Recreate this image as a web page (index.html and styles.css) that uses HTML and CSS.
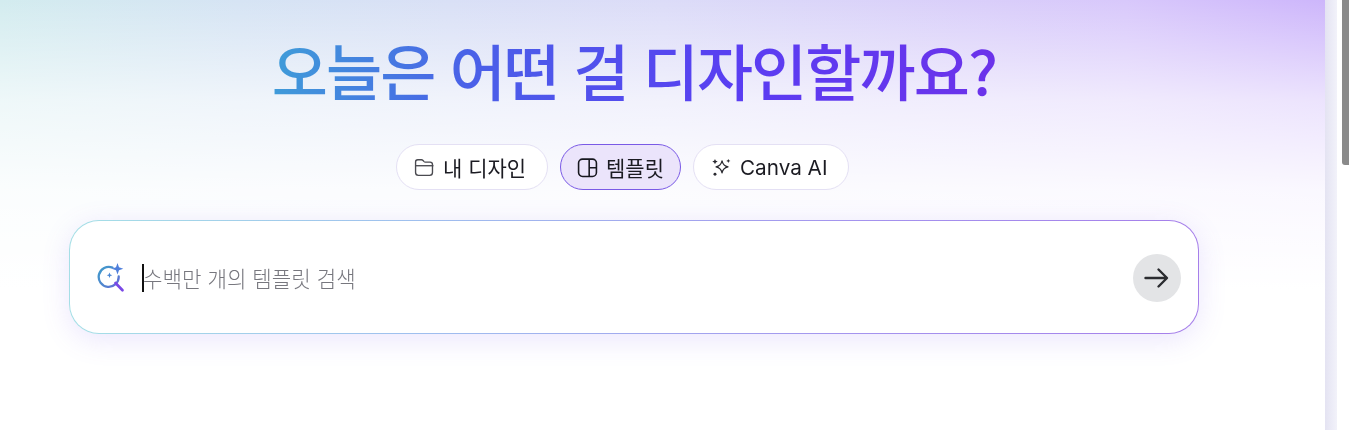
FILE: index.html
```html
<!DOCTYPE html>
<html lang="ko">
<head>
<meta charset="utf-8">
<title>Canva</title>
<link rel="stylesheet" href="styles.css">
</head>
<body>
<div class="page">
  <main class="hero">
    <div class="column">
      <h1 class="title"><span class="title-text">오늘은 어떤 걸 디자인할까요?</span></h1>
      <div class="pills">
        <button class="pill pill-a">
          <svg class="pill-icon" viewBox="0 0 20 20" fill="none" stroke="#4a4a50" stroke-width="1.300" stroke-linejoin="round"><path d="M1.500 4.700c0-1.200.9-2.100 2.100-2.100h3.500c.6 0 1.100.3 1.500.7l1 1.100c.3.3.7.500 1.100.500h4.600c1.300 0 2.300 1 2.300 2.300v7.600c0 1.500-1.200 2.700-2.700 2.700H4.200c-1.500 0-2.700-1.200-2.700-2.700z"/><path d="M1.500 8.300h17"/></svg>
          <span class="label">내 디자인</span>
        </button>
        <button class="pill pill-b is-active">
          <svg class="pill-icon" viewBox="0 0 20 20" fill="none" stroke="#17171f" stroke-width="1.500"><rect x="1.500" y="2" width="17" height="16.500" rx="3.800"/><path d="M11.600 2v16.500M11.600 10.200h6.900"/></svg>
          <span class="label">템플릿</span>
        </button>
        <button class="pill pill-c">
          <svg class="pill-icon" viewBox="0 0 20 20" fill="none" stroke="#2a2a30" stroke-width="1.200" stroke-linejoin="round"><path d="M10.500 3.800c.7 3.400 2.200 5 5.700 5.700-3.500.7-5 2.300-5.700 5.700-.7-3.400-2.200-5-5.700-5.700 3.500-.7 5-2.300 5.700-5.700z"/><g fill="#2a2a30" stroke="none"><path d="M3.800 1.800l.8 1.800 1.800.8-1.800.8-.8 1.800-.8-1.800-1.800-.8 1.800-.8z"/><path d="M16.500 1.800l.6 1.400 1.400.6-1.400.6-.6 1.400-.6-1.400-1.400-.6 1.400-.6z"/><circle cx="3.800" cy="16.400" r="1.400"/></g></svg>
          <span class="label">Canva AI</span>
        </button>
      </div>
      <div class="search">
        <svg class="search-icon" viewBox="0 0 30 32" fill="none">
          <defs><linearGradient id="sg" x1="0" y1="0" x2="1" y2="1"><stop offset="0" stop-color="#3f9ccb"/><stop offset=".7" stop-color="#5580d0"/><stop offset="1" stop-color="#6a60dc"/></linearGradient></defs>
          <path d="M15.500 5.600A10 10 0 1 0 21.700 14.500" stroke="url(#sg)" stroke-width="2.300" stroke-linecap="round"/>
          <path d="M18.500 21l7 7.200" stroke="#7a48e6" stroke-width="2.700" stroke-linecap="round"/>
          <path d="M20.500 1l1.500 4.300 4.300 1.500-4.300 1.500-1.500 4.300L19 8.300l-4.300-1.500L19 5.300z" fill="#4f7fdc"/>
          <path d="M12.500 10.500l.8 2 2 .8-2 .8-.8 2-.8-2-2-.8 2-.8z" fill="#4a86d4"/>
        </svg>
        <div class="field"><span class="caret"></span><span class="placeholder">수백만 개의 템플릿 검색</span></div>
        <button class="go" aria-label="검색">
          <svg viewBox="0 0 28 28" width="28" height="28" fill="none" stroke="#2b2c30" stroke-width="2.400" stroke-linecap="round" stroke-linejoin="round"><path d="M2.500 14h21M15.500 5.500l8.500 8.500-8.500 8.500"/></svg>
        </button>
      </div>
    </div>
  </main>
  <div class="rail"></div>
  <div class="scrollbar"><div class="thumb"></div></div>
</div>
</body>
</html>
```
FILE: styles.css
```css
* { box-sizing: border-box; }
html, body { margin: 0; height: 100%; overflow: hidden; background: #fff; }
body { font-family: "Noto Sans CJK KR", "Noto Sans", sans-serif; }
.page { display: flex; height: 430px; }
.hero {
  width: 1325px;
  flex: none;
  padding-left: 69px;
  background:
    linear-gradient(180deg, rgba(255,255,255,0) 0, rgba(255,255,255,.62) 100px, rgba(255,255,255,.9) 190px, #fff 290px),
    linear-gradient(90deg, #d3ecef 0, #d6e4f4 18%, #dcdcf8 50%, #d8c8fb 85%, #cdb6fb 100%);
}
.column { width: 1130px; display: flex; flex-direction: column; }
.title {
  margin: 30px 0 0;
  height: 80px;
  text-align: center;
  font-size: 61px;
  line-height: 80px;
  font-weight: 500;
  letter-spacing: -1.900px;
}
.title-text {
  background: linear-gradient(100deg, #3f9fd8 0, #4a60e8 28%, #5a3df2 65%, #6c32ea 100%);
  -webkit-background-clip: text;
  background-clip: text;
  color: transparent;
}
.pills { display: flex; justify-content: center; gap: 12px; margin-top: 34px; padding-right: 23px; }
.pill {
  height: 46px;
  display: flex;
  align-items: center;
  justify-content: center;
  gap: 8px;
  border: 1px solid #e4e0f4;
  border-radius: 23px;
  background: #fff;
  color: #1b1b22;
  font: 400 21px "Inter", "Noto Sans CJK KR", sans-serif;
  padding: 0;
}
.label { will-change: transform; }
.pill-a { width: 152px; padding-right: 4px; }
.pill-b { width: 121px; }
.pill-c { width: 156px; padding-right: 4px; font-size: 20.700px; }
.pill.is-active { background: #ebe4fb; border-color: #7a5ae6; }
.pill-icon { width: 21px; height: 21px; flex: none; }
.search {
  margin-top: 30px;
  height: 114px;
  display: flex;
  align-items: center;
  padding: 1px 17px 0 27px;
  border: 1px solid transparent;
  border-radius: 30px;
  background:
    linear-gradient(#fff, #fff) padding-box,
    linear-gradient(90deg, #a5dfe6 0, #9fc0ee 30%, #a493ee 70%, #a67fea 100%) border-box;
  box-shadow: 0 6px 28px rgba(130, 100, 240, .16);
}
.search-icon { width: 30px; height: 32px; flex: none; }
.field { flex: 1; display: flex; align-items: center; margin-left: 15px; height: 28px; position: relative; }
.caret { position: absolute; left: 0; top: 0; width: 2px; height: 28px; background: #111; }
.placeholder { padding-left: 1px; font-size: 21.200px; font-weight: 300; color: #77777e; will-change: transform; }
.go {
  width: 48px; height: 48px; flex: none; border: 0; border-radius: 50%; padding: 0;
  background: #e3e4e6; display: flex; align-items: center; justify-content: center;
}
.rail { width: 12px; flex: none; background: linear-gradient(90deg, #e4e3f2, #f2f2fa); }
.scrollbar { flex: 1; padding-left: 5px; }
.thumb { height: 165px; background: #8a8a8a; border-bottom-left-radius: 3px; }
```
